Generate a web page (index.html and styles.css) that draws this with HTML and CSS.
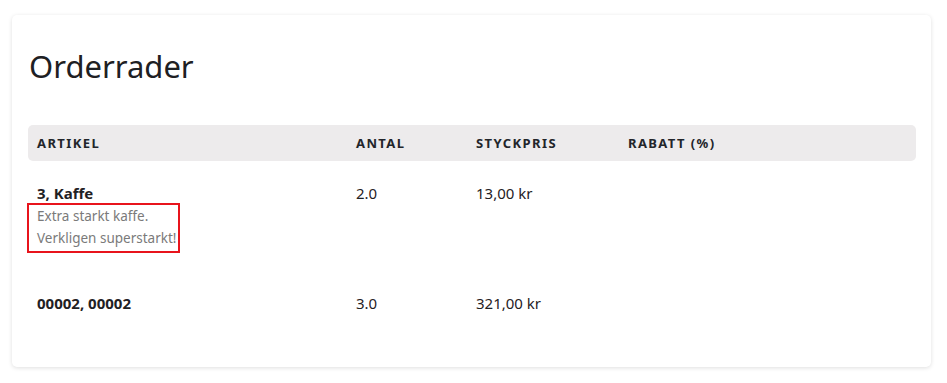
FILE: index.html
```html
<!DOCTYPE html>
<html lang="sv">
<head>
<meta charset="utf-8">
<link rel="stylesheet" href="styles.css">
</head>
<body>
<div class="card">
  <h2 class="title">Orderrader</h2>
  <table class="rows">
    <colgroup>
      <col class="c-art"><col class="c-antal"><col class="c-pris"><col>
    </colgroup>
    <thead>
      <tr><th>Artikel</th><th>Antal</th><th>Styckpris</th><th>Rabatt (%)</th></tr>
    </thead>
    <tbody>
      <tr>
        <td><div class="name">3, Kaffe</div><div class="desc">Extra starkt kaffe.<br>Verkligen superstarkt!</div></td>
        <td>2.0</td><td>13,00 kr</td><td></td>
      </tr>
      <tr>
        <td><div class="name">00002, 00002</div></td>
        <td>3.0</td><td>321,00 kr</td><td></td>
      </tr>
    </tbody>
  </table>
</div>
</body>
</html>
```

FILE: styles.css
```css
html, body { margin: 0; background: #ffffff; }
body {
  font-family: "Noto Sans", "Open Sans", sans-serif;
  color: #1f2124;
  padding: 15px 16px 16px 12px;
}
.card {
  background: #fff;
  border-radius: 5px;
  box-shadow: 0 1px 4px rgba(0,0,0,0.13);
  padding: 30px 15px 33px 16px;
}
.title {
  margin: 0 0 38px 1px;
  font-weight: 400;
  font-size: 31px;
  line-height: 42px;
  color: #1e2023;
}
.rows { width: 100%; border-collapse: separate; border-spacing: 0; }
.c-art { width: 319px; }
.c-antal { width: 120px; }
.c-pris { width: 152px; }
th {
  background: #edebec;
  text-align: left;
  font-size: 13px;
  font-weight: 700;
  letter-spacing: 1.4px;
  text-transform: uppercase;
  height: 36px;
  padding: 0 9px;
  color: #22252a;
}
th:first-child { border-radius: 5px 0 0 5px; }
th:last-child { border-radius: 0 5px 5px 0; }
td {
  vertical-align: top;
  padding: 21px 9px 20px 9px;
  font-size: 15px;
  line-height: 22px;
}
.name { font-weight: 700; font-size: 15px; }
.desc {
  color: #7a7a7a;
  font-size: 13.5px;
  line-height: 22px;
  outline: 2px solid #e8141c;
  outline-offset: 0;
  display: inline-block;
  margin: 1px 0 0 -8px;
  padding: 0 2px 2px 8px;
}
```
